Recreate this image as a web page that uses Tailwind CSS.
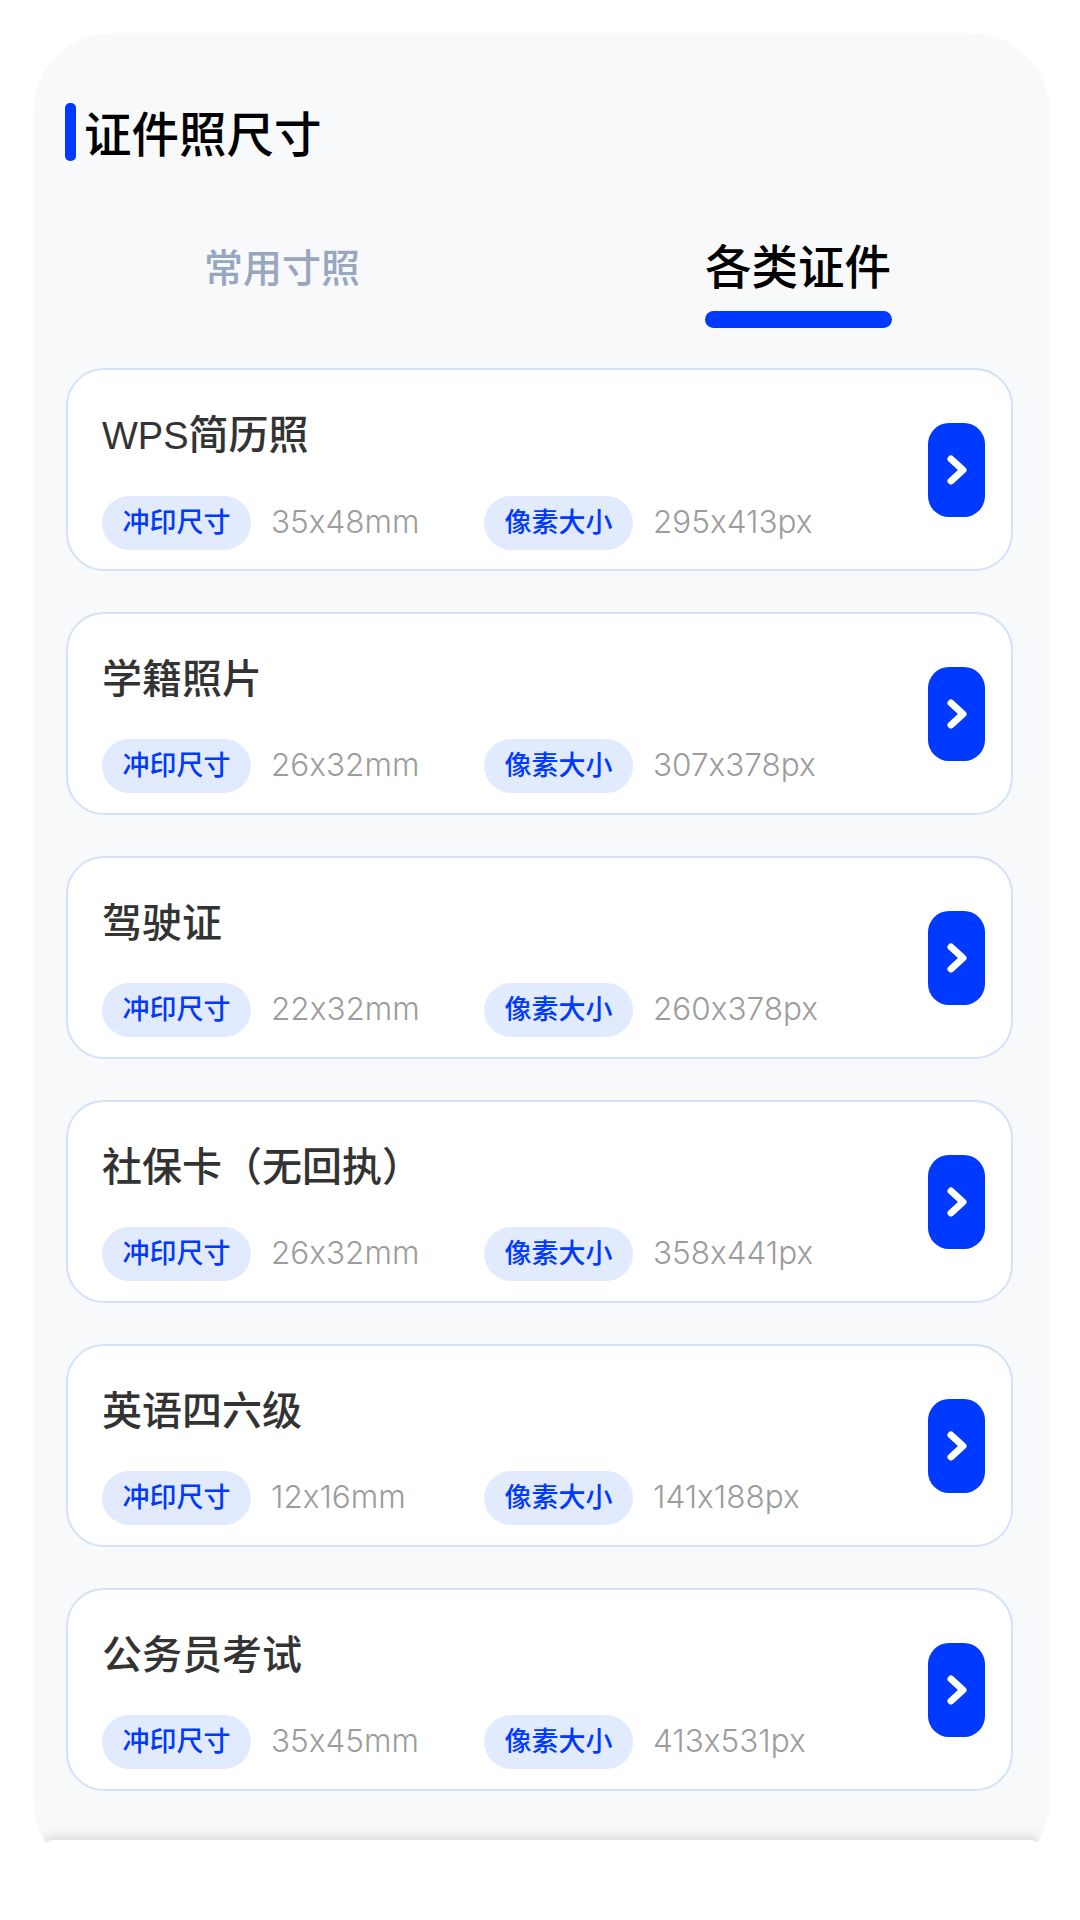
<!DOCTYPE html>
<html lang="zh">
<head>
<meta charset="utf-8">
<script src="https://cdn.jsdelivr.net/npm/@tailwindcss/browser@4"></script>
</head>
<body class="bg-white">
<div class="w-[1080px] h-[1920px] overflow-hidden bg-white font-['Liberation_Sans','Noto_Sans_CJK_SC',sans-serif]">
  <div class="relative overflow-hidden ml-[33px] mt-[33px] w-[1017px] h-[1846px] rounded-[80px] bg-[#f7f9fb] pl-[33px] pr-[37px] pt-[70px]">
    <div class="flex items-center h-[58px] -ml-[1px]">
      <div class="w-[11px] h-[58px] rounded-[5px] bg-[#0039ff]"></div>
      <div class="ml-[8px] pt-[8px] text-[47.5px] leading-[58px] text-black font-medium">证件照尺寸</div>
    </div>
    <div class="flex items-start h-[207px]">
      <div class="ml-[138px] mt-[83px] w-[156px] text-[39px] leading-[50px] text-[#98a6c0] font-medium">常用寸照</div>
      <div class="ml-[345px] mt-[76px] flex flex-col">
        <div class="text-[46.5px] leading-[62px] text-black font-medium">各类证件</div>
        <div class="mt-[12px] w-[187px] h-[17px] rounded-full bg-[#0039ff]"></div>
      </div>
    </div>
    <div class="flex flex-col gap-[41px]">

      <div class="relative h-[203px] rounded-[38px] border-2 border-[#d5e0fb] bg-white pl-[34px] pt-[39px]">
        <div class="text-[40px] leading-[52px] text-[#333] font-medium"><span class="text-[38px]">WPS</span>简历照</div>
        <div class="mt-[34px] flex items-center">
          <div class="w-[149px] h-[54px] rounded-full bg-[#e2ebfe] flex items-center justify-center text-[27px] text-[#0039ff] font-medium">冲印尺寸</div>
          <div class="ml-[20px] -mt-[2px] w-[213px] font-['Inter',sans-serif] [font-feature-settings:'calt'_0] font-light text-[31.5px] text-[#9c9c9c]">35x48mm</div>
          <div class="w-[149px] h-[54px] rounded-full bg-[#e2ebfe] flex items-center justify-center text-[27px] text-[#0039ff] font-medium">像素大小</div>
          <div class="ml-[20px] -mt-[2px] font-['Inter',sans-serif] [font-feature-settings:'calt'_0] font-light text-[31.5px] text-[#9c9c9c]">295x413px</div>
        </div>
        <div class="absolute right-[26px] top-[53px] w-[57px] h-[94px] rounded-[21px] bg-[#0039ff] flex items-center justify-center">
          <svg width="22" height="32" viewBox="0 0 22 32" fill="none"><path d="M5 5 L17 16 L5 27" stroke="#fff" stroke-width="7" stroke-linecap="round" stroke-linejoin="round"/></svg>
        </div>
      </div>

      <div class="relative h-[203px] rounded-[38px] border-2 border-[#d5e0fb] bg-white pl-[34px] pt-[39px]">
        <div class="text-[40px] leading-[52px] text-[#333] font-medium">学籍照片</div>
        <div class="mt-[34px] flex items-center">
          <div class="w-[149px] h-[54px] rounded-full bg-[#e2ebfe] flex items-center justify-center text-[27px] text-[#0039ff] font-medium">冲印尺寸</div>
          <div class="ml-[20px] -mt-[2px] w-[213px] font-['Inter',sans-serif] [font-feature-settings:'calt'_0] font-light text-[31.5px] text-[#9c9c9c]">26x32mm</div>
          <div class="w-[149px] h-[54px] rounded-full bg-[#e2ebfe] flex items-center justify-center text-[27px] text-[#0039ff] font-medium">像素大小</div>
          <div class="ml-[20px] -mt-[2px] font-['Inter',sans-serif] [font-feature-settings:'calt'_0] font-light text-[31.5px] text-[#9c9c9c]">307x378px</div>
        </div>
        <div class="absolute right-[26px] top-[53px] w-[57px] h-[94px] rounded-[21px] bg-[#0039ff] flex items-center justify-center">
          <svg width="22" height="32" viewBox="0 0 22 32" fill="none"><path d="M5 5 L17 16 L5 27" stroke="#fff" stroke-width="7" stroke-linecap="round" stroke-linejoin="round"/></svg>
        </div>
      </div>

      <div class="relative h-[203px] rounded-[38px] border-2 border-[#d5e0fb] bg-white pl-[34px] pt-[39px]">
        <div class="text-[40px] leading-[52px] text-[#333] font-medium">驾驶证</div>
        <div class="mt-[34px] flex items-center">
          <div class="w-[149px] h-[54px] rounded-full bg-[#e2ebfe] flex items-center justify-center text-[27px] text-[#0039ff] font-medium">冲印尺寸</div>
          <div class="ml-[20px] -mt-[2px] w-[213px] font-['Inter',sans-serif] [font-feature-settings:'calt'_0] font-light text-[31.5px] text-[#9c9c9c]">22x32mm</div>
          <div class="w-[149px] h-[54px] rounded-full bg-[#e2ebfe] flex items-center justify-center text-[27px] text-[#0039ff] font-medium">像素大小</div>
          <div class="ml-[20px] -mt-[2px] font-['Inter',sans-serif] [font-feature-settings:'calt'_0] font-light text-[31.5px] text-[#9c9c9c]">260x378px</div>
        </div>
        <div class="absolute right-[26px] top-[53px] w-[57px] h-[94px] rounded-[21px] bg-[#0039ff] flex items-center justify-center">
          <svg width="22" height="32" viewBox="0 0 22 32" fill="none"><path d="M5 5 L17 16 L5 27" stroke="#fff" stroke-width="7" stroke-linecap="round" stroke-linejoin="round"/></svg>
        </div>
      </div>

      <div class="relative h-[203px] rounded-[38px] border-2 border-[#d5e0fb] bg-white pl-[34px] pt-[39px]">
        <div class="text-[40px] leading-[52px] text-[#333] font-medium">社保卡（无回执）</div>
        <div class="mt-[34px] flex items-center">
          <div class="w-[149px] h-[54px] rounded-full bg-[#e2ebfe] flex items-center justify-center text-[27px] text-[#0039ff] font-medium">冲印尺寸</div>
          <div class="ml-[20px] -mt-[2px] w-[213px] font-['Inter',sans-serif] [font-feature-settings:'calt'_0] font-light text-[31.5px] text-[#9c9c9c]">26x32mm</div>
          <div class="w-[149px] h-[54px] rounded-full bg-[#e2ebfe] flex items-center justify-center text-[27px] text-[#0039ff] font-medium">像素大小</div>
          <div class="ml-[20px] -mt-[2px] font-['Inter',sans-serif] [font-feature-settings:'calt'_0] font-light text-[31.5px] text-[#9c9c9c]">358x441px</div>
        </div>
        <div class="absolute right-[26px] top-[53px] w-[57px] h-[94px] rounded-[21px] bg-[#0039ff] flex items-center justify-center">
          <svg width="22" height="32" viewBox="0 0 22 32" fill="none"><path d="M5 5 L17 16 L5 27" stroke="#fff" stroke-width="7" stroke-linecap="round" stroke-linejoin="round"/></svg>
        </div>
      </div>

      <div class="relative h-[203px] rounded-[38px] border-2 border-[#d5e0fb] bg-white pl-[34px] pt-[39px]">
        <div class="text-[40px] leading-[52px] text-[#333] font-medium">英语四六级</div>
        <div class="mt-[34px] flex items-center">
          <div class="w-[149px] h-[54px] rounded-full bg-[#e2ebfe] flex items-center justify-center text-[27px] text-[#0039ff] font-medium">冲印尺寸</div>
          <div class="ml-[20px] -mt-[2px] w-[213px] font-['Inter',sans-serif] [font-feature-settings:'calt'_0] font-light text-[31.5px] text-[#9c9c9c]">12x16mm</div>
          <div class="w-[149px] h-[54px] rounded-full bg-[#e2ebfe] flex items-center justify-center text-[27px] text-[#0039ff] font-medium">像素大小</div>
          <div class="ml-[20px] -mt-[2px] font-['Inter',sans-serif] [font-feature-settings:'calt'_0] font-light text-[31.5px] text-[#9c9c9c]">141x188px</div>
        </div>
        <div class="absolute right-[26px] top-[53px] w-[57px] h-[94px] rounded-[21px] bg-[#0039ff] flex items-center justify-center">
          <svg width="22" height="32" viewBox="0 0 22 32" fill="none"><path d="M5 5 L17 16 L5 27" stroke="#fff" stroke-width="7" stroke-linecap="round" stroke-linejoin="round"/></svg>
        </div>
      </div>

      <div class="relative h-[203px] rounded-[38px] border-2 border-[#d5e0fb] bg-white pl-[34px] pt-[39px]">
        <div class="text-[40px] leading-[52px] text-[#333] font-medium">公务员考试</div>
        <div class="mt-[34px] flex items-center">
          <div class="w-[149px] h-[54px] rounded-full bg-[#e2ebfe] flex items-center justify-center text-[27px] text-[#0039ff] font-medium">冲印尺寸</div>
          <div class="ml-[20px] -mt-[2px] w-[213px] font-['Inter',sans-serif] [font-feature-settings:'calt'_0] font-light text-[31.5px] text-[#9c9c9c]">35x45mm</div>
          <div class="w-[149px] h-[54px] rounded-full bg-[#e2ebfe] flex items-center justify-center text-[27px] text-[#0039ff] font-medium">像素大小</div>
          <div class="ml-[20px] -mt-[2px] font-['Inter',sans-serif] [font-feature-settings:'calt'_0] font-light text-[31.5px] text-[#9c9c9c]">413x531px</div>
        </div>
        <div class="absolute right-[26px] top-[53px] w-[57px] h-[94px] rounded-[21px] bg-[#0039ff] flex items-center justify-center">
          <svg width="22" height="32" viewBox="0 0 22 32" fill="none"><path d="M5 5 L17 16 L5 27" stroke="#fff" stroke-width="7" stroke-linecap="round" stroke-linejoin="round"/></svg>
        </div>
      </div>

    </div>
    <div class="absolute left-[8px] top-[1807px] bottom-0 w-[1001px] rounded-t-[12px] bg-white shadow-[0_-3px_12px_rgba(0,0,0,0.14)]"></div>
  </div>
</div>
</body>
</html>
